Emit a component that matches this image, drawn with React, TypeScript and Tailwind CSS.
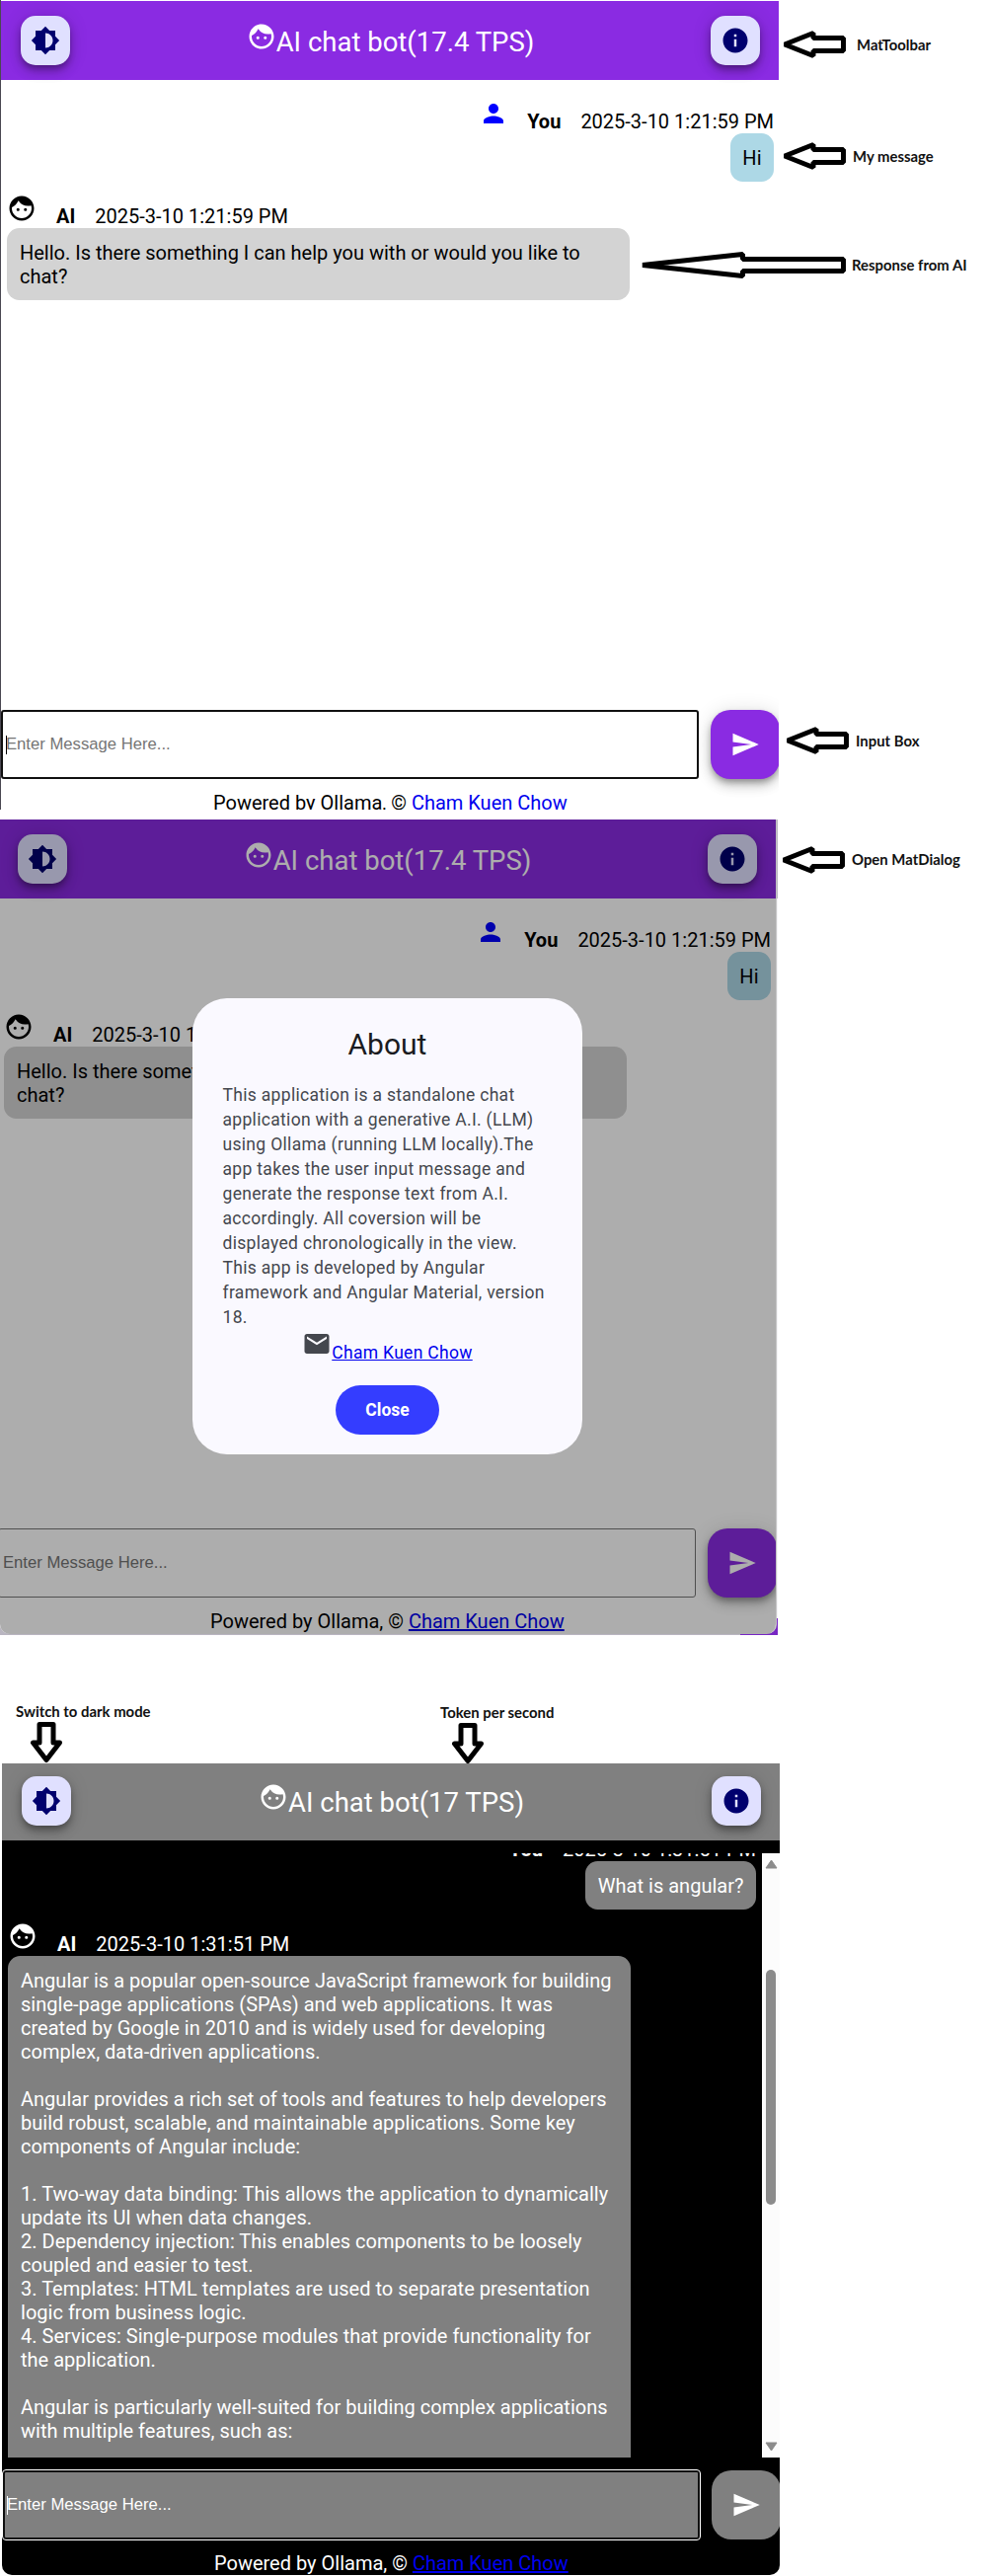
import type { ReactNode } from "react";
import { MdBrightness6, MdEmail, MdFace, MdInfo, MdPerson, MdSend } from "react-icons/md";

const fabShadow = "shadow-[0_4px_6px_-1px_rgba(0,0,0,0.3),0_7px_12px_rgba(0,0,0,0.16),0_1px_20px_rgba(0,0,0,0.12)]";

function Toolbar({ tps, dark }: { tps: string; dark?: boolean }) {
  const tile = `flex size-[50px] items-center justify-center rounded-[15px] bg-[#e0e0ff] text-[#00006e] ${fabShadow}`;
  return (
    <header
      className={`flex shrink-0 items-start justify-between pr-[19px] pl-5 text-white ${
        dark ? "h-[78px] bg-[#808080] pt-[13px]" : "h-20 bg-[#8a2be2] pt-[15px]"
      }`}
    >
      <button className={tile}>
        <MdBrightness6 size={30} />
      </button>
      <h1 className="flex pt-[6px] text-[27.5px] leading-[35px] font-normal">
        <MdFace size={30} />
        <span className="pt-[3px]">AI chat bot({tps} TPS)</span>
      </h1>
      <button className={tile}>
        <MdInfo size={30} />
      </button>
    </header>
  );
}

function Stamp({ name, time }: { name: string; time: string }) {
  return (
    <>
      <b className="font-bold">{name}</b>
      <span className="ml-5">{time}</span>
    </>
  );
}

function InputRow({ dark, focused }: { dark?: boolean; focused?: boolean }) {
  return (
    <div className="flex h-[70px] shrink-0">
      <div
        className={`flex h-[70px] shrink-0 items-center rounded-[3px] font-['Liberation_Sans',sans-serif] text-[16.67px] ${
          dark
            ? "ml-px w-[706px] border-2 border-[#101010] bg-[#808080] pl-[2px] text-white outline outline-white"
            : focused
              ? "w-[707px] border-2 border-[#101010] bg-white pl-[3px] text-[#757575]"
              : "w-[707px] border border-[#767676] bg-white pl-1 text-[#757575]"
        }`}
      >
        {focused && <span className={`-mr-px h-[19px] w-px ${dark ? "bg-white" : "bg-black"}`} />}
        <span className="pb-[2px]">Enter Message Here...</span>
      </div>
      <button
        className={`ml-3 flex size-[70px] shrink-0 items-center justify-center rounded-[20px] text-white ${fabShadow} ${
          dark ? "bg-[#808080]" : "bg-[#8a2be2]"
        }`}
      >
        <MdSend size={30} />
      </button>
    </div>
  );
}

function Footer({ dark }: { dark?: boolean }) {
  return (
    <footer
      className={`shrink-0 pt-[12px] text-xl leading-6 whitespace-nowrap ${dark ? "pl-[215px] text-white" : "pl-[215px] text-black"}`}
    >
      Powered by Ollama, © <a className="text-[#0000ee] underline">Cham Kuen Chow</a>
    </footer>
  );
}

function LightChat({ focused }: { focused?: boolean }) {
  return (
    <div className="flex w-[788px] shrink-0 flex-col bg-white">
      <Toolbar tps="17.4" />
      <main className="flex h-[638px] shrink-0 flex-col pr-[5px] pl-[6px] text-xl leading-6 text-black">
        <div className="flex h-[54px] items-end justify-end">
          <MdPerson size={30} className="mr-[19px] mb-[5px] text-[#0000ff]" />
          <Stamp name="You" time="2025-3-10 1:21:59 PM" />
        </div>
        <div className="self-end rounded-[12.5px] bg-[#add8e6] p-[12.5px]">Hi</div>
        <div className="flex h-[47px] items-end">
          <MdFace size={30} className="mr-5 mb-[5px]" />
          <Stamp name="AI" time="2025-3-10 1:21:59 PM" />
        </div>
        <div className="h-[73px] w-[631px] rounded-[12.5px] bg-[#d3d3d3] p-[12.5px] pl-[13px]">
          Hello. Is there something I can help you with or would you like to
          <br />
          chat?
        </div>
      </main>
      <InputRow focused={focused} />
      <Footer />
    </div>
  );
}

const answer = [
  "Angular is a popular open-source JavaScript framework for building",
  "single-page applications (SPAs) and web applications. It was",
  "created by Google in 2010 and is widely used for developing",
  "complex, data-driven applications.",
  "",
  "Angular provides a rich set of tools and features to help developers",
  "build robust, scalable, and maintainable applications. Some key",
  "components of Angular include:",
  "",
  "1. Two-way data binding: This allows the application to dynamically",
  "update its UI when data changes.",
  "2. Dependency injection: This enables components to be loosely",
  "coupled and easier to test.",
  "3. Templates: HTML templates are used to separate presentation",
  "logic from business logic.",
  "4. Services: Single-purpose modules that provide functionality for",
  "the application.",
  "",
  "Angular is particularly well-suited for building complex applications",
  "with multiple features, such as:",
];

function DarkChat() {
  return (
    <div className="ml-0.5 flex h-[822px] w-[788px] flex-col overflow-hidden rounded-b-[10px] bg-black text-white">
      <Toolbar tps="17" dark />
      <div className="mt-[13px] flex h-[612px] shrink-0">
        <main className="flex w-[770px] flex-col overflow-hidden pr-[6px] pl-[6px] text-xl leading-6 tracking-[0.015px]">
          <div className="flex h-2 shrink-0 items-end justify-end overflow-hidden">
            <Stamp name="You" time="2025-3-10 1:31:51 PM" />
          </div>
          <div className="shrink-0 self-end rounded-[12.5px] bg-[#808080] p-[12.5px]">What is angular?</div>
          <div className="flex h-[47px] shrink-0 items-end">
            <MdFace size={30} className="mr-5 mb-[5px]" />
            <Stamp name="AI" time="2025-3-10 1:31:51 PM" />
          </div>
          <div className="w-[631px] shrink-0 rounded-t-[12.5px] bg-[#808080] p-[13px] pb-10 whitespace-pre">
            {answer.join("\n")}
          </div>
        </main>
        <div className="flex w-[18px] flex-col items-center bg-[#fcfcfc] py-[6px]">
          <svg width="13" height="10" viewBox="0 0 13 10">
            <path d="M6.5 1 12 9H1z" fill="#8b8b8b" stroke="#8b8b8b" strokeLinejoin="round" />
          </svg>
          <div className="mt-[102px] h-[238px] w-[10px] rounded-full bg-[#8b8b8b]" />
          <svg className="mt-auto" width="13" height="10" viewBox="0 0 13 10">
            <path d="M6.5 9 12 1H1z" fill="#8b8b8b" stroke="#8b8b8b" strokeLinejoin="round" />
          </svg>
        </div>
      </div>
      <div className="mt-[13px]">
        <InputRow dark focused />
      </div>
      <Footer dark />
    </div>
  );
}

function AboutDialog() {
  return (
    <div className="absolute top-[181px] left-[195px] flex h-[462px] w-[395px] flex-col items-center rounded-[35px] bg-[#faf9ff] text-[17.5px] leading-[25px] text-[#44474e]">
      <h2 className="mt-[27px] text-[30px] leading-10 text-[#1a1b1f]">About</h2>
      <p className="mt-[19px] w-full pl-[30.5px] tracking-[0.3125px] whitespace-pre">
        {`This application is a standalone chat
application with a generative A.I. (LLM)
using Ollama (running LLM locally).The
app takes the user input message and
generate the response text from A.I.
accordingly. All coversion will be
displayed chronologically in the view.
This app is developed by Angular
framework and Angular Material, version
18.`}
      </p>
      <div className="-mt-px flex items-end">
        <MdEmail size={30} className="mb-[6px]" />
        <a className="relative top-px tracking-[0.3125px] text-[#0000ee] underline">Cham Kuen Chow</a>
      </div>
      <button className="mt-[21px] h-[50px] w-[105px] rounded-full bg-[#343dff] pt-px font-bold text-white">Close</button>
    </div>
  );
}

function Callout({ className, children }: { className: string; children: ReactNode }) {
  return (
    <div className={`absolute font-['Lato',sans-serif] text-[14.9px] leading-5 font-bold whitespace-nowrap text-[#111] ${className}`}>
      {children}
    </div>
  );
}

function LeftArrow({ className, long }: { className: string; long?: boolean }) {
  return long ? (
    <svg className={`absolute ${className}`} width="210" height="30" viewBox="0 0 210 30" fill="none" stroke="#000" strokeWidth="5">
      <path d="M3 14.5 104.5 3.5V8.5H206.500V20.500H104.5V25.500Z" strokeLinejoin="bevel" />
    </svg>
  ) : (
    <svg className={`absolute ${className}`} width="66" height="30" viewBox="0 0 66 30" fill="none" stroke="#000" strokeWidth="5">
      <path d="M3 15 32 3.500V8.500H62.500V21.500H32V26.500Z" strokeLinejoin="bevel" />
    </svg>
  );
}

function DownArrow({ className }: { className: string }) {
  return (
    <svg className={`absolute ${className}`} width="34" height="42" viewBox="0 0 34 42" fill="none" stroke="#000" strokeWidth="5">
      <path d="M10 2.500H24V21H30.500L17 38.500 3.500 21H10Z" strokeLinejoin="round" />
    </svg>
  );
}

export default function App() {
  return (
    <div className="relative h-[2609px] w-[1000px] overflow-hidden bg-white font-['Roboto',sans-serif]">
      <section className="flex h-[820px] w-[789px] overflow-hidden border-l border-[#4a4852] pt-px">
        <LightChat focused />
      </section>

      <section className="relative mt-[10px] h-[826px] w-[788px] overflow-hidden bg-[#b9b5c0]">
        <div className="absolute right-0 bottom-0 h-[17px] w-[38px] bg-[#7726c3]" />
        <div className="absolute top-20 right-0 h-[729px] w-px bg-[#f4f4f6]" />
        <div className="relative h-[825px] w-[787px] overflow-hidden rounded-b-[10px] border-r border-[#c4c4c4] bg-white">
          <div className="-ml-0.5">
            <LightChat />
          </div>
          <div className="absolute inset-0 bg-black/32" />
        </div>
        <AboutDialog />
      </section>

      <section className="mt-[130px]">
        <DarkChat />
      </section>

      <LeftArrow className="top-[30px] left-[792px]" />
      <Callout className="top-[35px] left-[868px]">MatToolbar</Callout>
      <LeftArrow className="top-[143px] left-[792px]" />
      <Callout className="top-[148px] left-[864px]">My message</Callout>
      <LeftArrow long className="top-[254px] left-[648px]" />
      <Callout className="top-[258px] left-[863px]">Response from AI</Callout>
      <LeftArrow className="top-[735px] left-[795px]" />
      <Callout className="top-[740px] left-[867px]">Input Box</Callout>
      <LeftArrow className="top-[856px] left-[791px]" />
      <Callout className="top-[860px] left-[863px]">Open MatDialog</Callout>
      <Callout className="top-[1723px] left-[16px]">Switch to dark mode</Callout>
      <DownArrow className="top-[1744px] left-[30px]" />
      <Callout className="top-[1724px] left-[446px]">Token per second</Callout>
      <DownArrow className="top-[1745px] left-[457px]" />
    </div>
  );
}
